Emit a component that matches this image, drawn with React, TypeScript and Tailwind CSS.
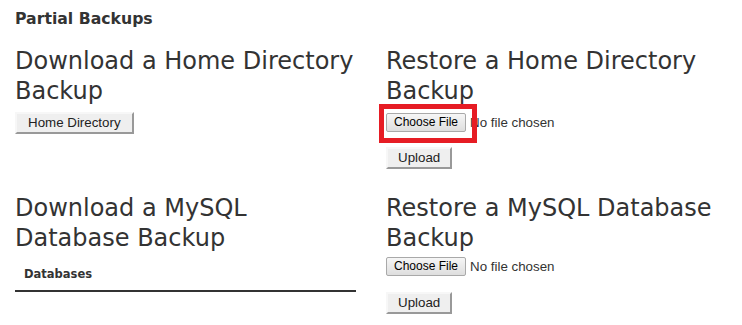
import React from 'react'

const headingCls = "text-[24px] leading-[30px] text-[#333] font-normal"

const legacyBtn =
  "flex items-center h-[22px] bg-[#efefef] text-[#222] text-[13.33px] px-[10px] border-2 border-t-[#f7f7f7] border-l-[#f7f7f7] border-r-[#999] border-b-[#999]"

const sansBtn = { fontFamily: '"Liberation Sans", Arial, sans-serif' }

const FileInput: React.FC<{ highlighted?: boolean }> = ({ highlighted }) => (
  <div className="flex items-center text-[13.33px] text-[#333]" style={sansBtn}>
    <div className="relative">
      <button className="block bg-gradient-to-b from-[#f6f6f6] to-[#dedede] border border-[#a9a9a9] rounded-[2px] px-[7px] h-[19px] leading-[17px] text-[12px] text-black">
        Choose File
      </button>
      {highlighted && (
        <div className="absolute left-[-7px] top-[-9px] w-[98px] h-[39px] border-[5px] border-[#e61c24]" />
      )}
    </div>
    <span className="ml-[4px]">No file chosen</span>
  </div>
)

export default function App() {
  return (
    <div className="w-[742px] h-[325px] bg-white px-[15px] pt-[8px] overflow-hidden" style={{ fontFamily: '"DejaVu Sans", Verdana, sans-serif' }}>
      <h3 className="text-[15.7px] font-bold text-[#333] leading-[22px]">Partial Backups</h3>

      <div className="grid grid-cols-2 gap-x-[30px] mt-[16px]">
        {/* Home directory */}
        <div>
          <h2 className={headingCls}>Download a Home Directory Backup</h2>
          <div className="mt-[6px] flex">
            <button className={`${legacyBtn} px-[11px]`} style={sansBtn}>
              Home Directory
            </button>
          </div>
        </div>
        <div>
          <h2 className={headingCls}>Restore a Home Directory Backup</h2>
          <div className="mt-[7px]">
            <FileInput highlighted />
          </div>
          <div className="mt-[14px] flex">
            <button className={legacyBtn} style={sansBtn}>
              Upload
            </button>
          </div>
        </div>

        {/* MySQL */}
        <div className="mt-[24px]">
          <h2 className={headingCls}>Download a MySQL Database Backup</h2>
          <div className="mt-[12px] border-b-2 border-[#333] pb-[8px] pl-[9px] leading-[16px]">
            <span className="text-[11.5px] font-bold text-[#333]">Databases</span>
          </div>
        </div>
        <div className="mt-[24px]">
          <h2 className={headingCls}>Restore a MySQL Database Backup</h2>
          <div className="mt-[4px]">
            <FileInput />
          </div>
          <div className="mt-[15px] flex">
            <button className={legacyBtn} style={sansBtn}>
              Upload
            </button>
          </div>
        </div>
      </div>
    </div>
  )
}
